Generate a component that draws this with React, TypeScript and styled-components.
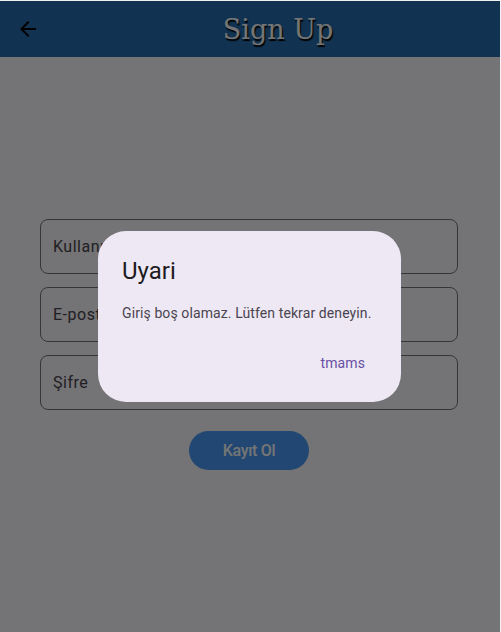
import React from "react";
import styled, { createGlobalStyle } from "styled-components";

const GlobalStyle = createGlobalStyle`
  html, body {
    margin: 0;
    padding: 0;
    height: 100%;
  }
  body {
    font-family: Roboto, "Noto Sans", "Liberation Sans", sans-serif;
    background: #fdfbff;
  }
  #root {
    height: 100%;
  }
`;

const Frame = styled.div`
  position: relative;
  height: 100vh;
  box-sizing: border-box;
  border-top: 1px solid #f0f0f0;
  border-right: 1px solid #f4f4f4;
  display: flex;
  flex-direction: column;
  background: #fdfbff;
  overflow: hidden;
`;

const AppBar = styled.header`
  height: 56px;
  flex-shrink: 0;
  display: flex;
  align-items: center;
  background: #256dae;
`;

const BackButton = styled.button`
  width: 56px;
  height: 56px;
  border: none;
  background: transparent;
  display: flex;
  align-items: center;
  justify-content: center;
  padding: 0;
  cursor: pointer;
`;

const Title = styled.h1`
  flex: 1;
  margin: 0;
  text-align: center;
  font-family: "DejaVu Serif", "Liberation Serif", serif;
  font-weight: 400;
  font-size: 27px;
  color: #ffffff;
  text-shadow: 1px 2px 1px rgba(0, 0, 0, 1);
`;

const Body = styled.main`
  flex: 1;
  display: flex;
  flex-direction: column;
  align-items: center;
  justify-content: center;
  padding-right: 2px;
`;

const Form = styled.div`
  width: 418px;
  display: flex;
  flex-direction: column;
  align-items: center;
  gap: 13px;
`;

const Field = styled.div`
  width: 100%;
  height: 55px;
  box-sizing: border-box;
  border: 1px solid #79747e;
  border-radius: 8px;
  display: flex;
  align-items: center;
  padding-left: 12px;
  font-size: 16px;
  letter-spacing: 0.5px;
  color: #49454f;
`;

const SubmitButton = styled.button`
  margin-top: 8px;
  width: 120px;
  height: 39px;
  border: none;
  border-radius: 20px;
  background: #4a9cf8;
  color: #ffffff;
  font-family: Roboto, "Noto Sans", sans-serif;
  font-size: 16px;
  font-weight: 500;
  letter-spacing: -0.3px;
  cursor: pointer;
`;

const Barrier = styled.div`
  position: absolute;
  inset: 0;
  background: rgba(0, 0, 0, 0.54);
`;

const Dialog = styled.div`
  position: absolute;
  left: 98px;
  top: 230px;
  width: 303px;
  box-sizing: border-box;
  padding: 24px 24px 19px;
  border-radius: 28px;
  background: #eee8f4;
  display: flex;
  flex-direction: column;
`;

const DialogTitle = styled.h2`
  margin: 0;
  font-size: 24px;
  line-height: 32px;
  font-weight: 400;
  color: #1d1b20;
`;

const DialogText = styled.p`
  margin: 16px 0 0;
  font-size: 14px;
  line-height: 20px;
  letter-spacing: 0.1px;
  white-space: nowrap;
  color: #49454f;
`;

const Actions = styled.div`
  margin-top: 20px;
  display: flex;
  justify-content: flex-end;
`;

const TextButton = styled.button`
  height: 40px;
  padding: 0 12px;
  border: none;
  background: transparent;
  font-family: Roboto, "Noto Sans", sans-serif;
  font-size: 14px;
  font-weight: 400;
  letter-spacing: 0.1px;
  color: #6750a4;
  cursor: pointer;
`;

const fields = ["Kullanıcı Adı", "E-posta", "Şifre"];

export default function App() {
  return (
    <>
      <GlobalStyle />
      <Frame>
        <AppBar>
          <BackButton aria-label="Geri">
            <svg width="24" height="24" viewBox="0 0 24 24">
              <path d="M20 11H7.83l5.59-5.59L12 4l-8 8 8 8 1.41-1.41L7.83 13H20v-2z" fill="#000" />
            </svg>
          </BackButton>
          <Title>Sign Up</Title>
        </AppBar>
        <Body>
          <Form>
            {fields.map((f) => (
              <Field key={f}>{f}</Field>
            ))}
            <SubmitButton>Kayıt Ol</SubmitButton>
          </Form>
        </Body>
        <Barrier />
        <Dialog role="alertdialog">
          <DialogTitle>Uyari</DialogTitle>
          <DialogText>Giriş boş olamaz. Lütfen tekrar deneyin.</DialogText>
          <Actions>
            <TextButton>tmams</TextButton>
          </Actions>
        </Dialog>
      </Frame>
    </>
  );
}
